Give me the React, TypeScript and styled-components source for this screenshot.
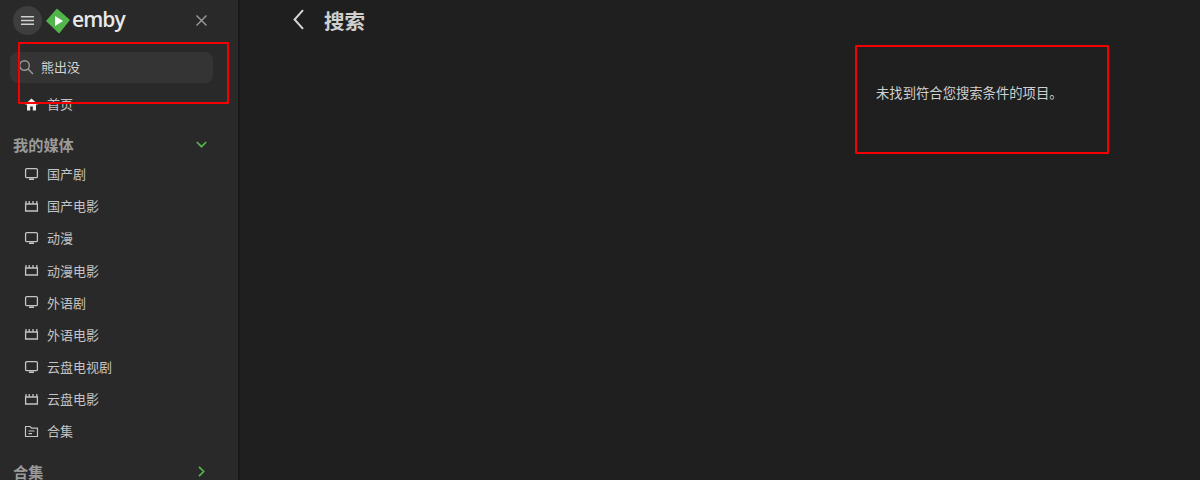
import React from "react";
import styled, { createGlobalStyle } from "styled-components";

const GlobalStyle = createGlobalStyle`
  html, body {
    margin: 0;
    height: 100%;
    background: #1f1f1f;
    overflow: hidden;
  }
  * {
    box-sizing: border-box;
  }
`;

const Page = styled.div`
  display: flex;
  width: 1200px;
  height: 480px;
  overflow: hidden;
  position: relative;
  color: #d8d8d8;
  font-family: "Noto Sans CJK SC", "Noto Sans", sans-serif;
`;

const Sidebar = styled.aside`
  flex: 0 0 240px;
  height: 480px;
  overflow: hidden;
  background: #292929;
  border-right: 2px solid #181818;
`;

const Brand = styled.div`
  display: flex;
  align-items: center;
  height: 41px;
  padding: 0 31px 0 13px;
`;

const MenuButton = styled.div`
  display: flex;
  align-items: center;
  justify-content: center;
  width: 29px;
  height: 29px;
  border-radius: 50%;
  background: #3e3e3e;
  color: #d0d0d0;
`;

const Logo = styled.div`
  display: flex;
  align-items: center;
  margin-left: 4px;
  flex: 1;
`;

const LogoText = styled.span`
  font-family: "Open Sans", sans-serif;
  font-size: 21px;
  font-weight: 600;
  letter-spacing: -0.9px;
  line-height: 24px;
  margin: -3px 0 0 2px;
  color: #e8e8e8;
`;

const CloseButton = styled.div`
  display: flex;
  color: #9c9c9c;
`;

const SearchBox = styled.div`
  display: flex;
  align-items: center;
  gap: 7px;
  width: 203px;
  height: 31px;
  margin: 11px 0 0 10px;
  padding: 0 0 2px 8px;
  border-radius: 8px;
  background: #343434;
  color: #9a9a9a;
`;

const SearchText = styled.span`
  font-size: 13px;
  line-height: 18px;
  color: #d4d4d4;
`;

const Nav = styled.nav`
  display: flex;
  flex-direction: column;
  margin-top: 5px;
`;

const NavRow = styled.div`
  display: flex;
  align-items: center;
  gap: 8px;
  height: 32.15px;
  padding-left: 24px;
  font-size: 13px;
  line-height: 18px;
  color: #c4c4c4;
`;

const SectionRow = styled.div`
  display: flex;
  align-items: center;
  justify-content: space-between;
  height: 18px;
  margin: 15px 0 5px;
  padding: 0 31px 0 13px;
  font-size: 15.2px;
  font-weight: 700;
  line-height: 18px;
  color: #9a9a9a;
`;

const SectionIcon = styled.span`
  display: flex;
  color: #52b54b;
`;

const Main = styled.main`
  flex: 1;
  display: flex;
  flex-direction: column;
`;

const Header = styled.header`
  display: flex;
  align-items: center;
  gap: 20px;
  height: 39px;
  padding-left: 53px;
  color: #d6d6d6;
`;

const Title = styled.h1`
  margin: 0;
  font-size: 20.5px;
  font-weight: 700;
  line-height: 28px;
  color: #cfcfcf;
`;

const EmptyMessage = styled.p`
  margin: 44px 0 0 636px;
  font-size: 13.33px;
  line-height: 20px;
  color: #d0d0d0;
`;

const Annotation = styled.div<{ $x: number; $y: number; $w: number; $h: number }>`
  position: absolute;
  left: ${({ $x }) => $x}px;
  top: ${({ $y }) => $y}px;
  width: ${({ $w }) => $w}px;
  height: ${({ $h }) => $h}px;
  border: 2px solid #f40000;
  border-radius: 1px;
  pointer-events: none;
`;

const TvIcon = () => (
  <svg width="15" height="15" viewBox="0 0 15 15" fill="none" stroke="currentColor">
    <rect x="1.6" y="1.6" width="11.8" height="9" rx="1.2" strokeWidth="1.3" />
    <path d="M5 12.2h5" strokeWidth="1.6" />
  </svg>
);

const MovieIcon = () => (
  <svg width="15" height="15" viewBox="0 0 15 15" fill="none" stroke="currentColor">
    <path d="M1.6 5h11.8v7H1.6z" strokeWidth="1.3" />
    <path d="M2 2v3M5.2 2v3M9 2v3M12.8 2v3" strokeWidth="1.3" />
  </svg>
);

const FolderIcon = () => (
  <svg width="15" height="15" viewBox="0 0 15 15" fill="none" stroke="currentColor" strokeWidth="1.2">
    <path d="M1.5 2.5h4.5l1.5 1.6h6v8.4h-12z" strokeLinejoin="round" />
    <path d="M4.5 7h6M4.5 9.6h3.5" />
  </svg>
);

const HomeIcon = () => (
  <svg width="15" height="15" viewBox="0 0 15 15" fill="#eeeeee">
    <path d="M7.5 1.5L1 7.5h2v6h3.2V9.5h2.6v4H12v-6h2z" />
  </svg>
);

const items: { label: string; icon: React.ReactNode }[] = [
  { label: "国产剧", icon: <TvIcon /> },
  { label: "国产电影", icon: <MovieIcon /> },
  { label: "动漫", icon: <TvIcon /> },
  { label: "动漫电影", icon: <MovieIcon /> },
  { label: "外语剧", icon: <TvIcon /> },
  { label: "外语电影", icon: <MovieIcon /> },
  { label: "云盘电视剧", icon: <TvIcon /> },
  { label: "云盘电影", icon: <MovieIcon /> },
  { label: "合集", icon: <FolderIcon /> },
];

export default function App() {
  return (
    <Page>
      <GlobalStyle />
      <Sidebar>
        <Brand>
          <MenuButton>
            <svg width="13" height="13" viewBox="0 0 13 13" stroke="currentColor" strokeWidth="1.5">
              <path d="M0 2.8h13M0 6.5h13M0 10.2h13" />
            </svg>
          </MenuButton>
          <Logo>
            <svg width="24" height="26" viewBox="0 0 24 26">
              <path
                d="M11 1.5L23 12 13 24.5 1 13z"
                fill="#52b54b"
                stroke="#52b54b"
                strokeWidth="1.5"
                strokeLinejoin="round"
              />
              <path d="M9 8l8 5-8 5z" fill="#ffffff" />
            </svg>
            <LogoText>emby</LogoText>
          </Logo>
          <CloseButton>
            <svg width="11" height="11" viewBox="0 0 11 11" stroke="currentColor" strokeWidth="1.4">
              <path d="M0.5 0.5l10 10M10.5 0.5l-10 10" />
            </svg>
          </CloseButton>
        </Brand>
        <SearchBox>
          <svg width="16" height="16" viewBox="0 0 16 16" fill="none" stroke="currentColor" strokeWidth="1.4">
            <circle cx="6.5" cy="6.5" r="4.8" />
            <path d="M10 10l5 5" />
          </svg>
          <SearchText>熊出没</SearchText>
        </SearchBox>
        <Nav>
          <NavRow>
            <HomeIcon />
            首页
          </NavRow>
          <SectionRow>
            我的媒体
            <SectionIcon>
              <svg width="11" height="11" viewBox="0 0 11 11" fill="none" stroke="currentColor" strokeWidth="1.7">
                <path d="M0.8 3l4.7 4.7L10.2 3" />
              </svg>
            </SectionIcon>
          </SectionRow>
          {items.map((item) => (
            <NavRow key={item.label}>
              {item.icon}
              {item.label}
            </NavRow>
          ))}
          <SectionRow>
            合集
            <SectionIcon>
              <svg width="11" height="11" viewBox="0 0 11 11" fill="none" stroke="currentColor" strokeWidth="1.7">
                <path d="M3 0.8l4.7 4.7L3 10.2" />
              </svg>
            </SectionIcon>
          </SectionRow>
        </Nav>
      </Sidebar>
      <Main>
        <Header>
          <svg width="11" height="21" viewBox="0 0 11 21" fill="none" stroke="currentColor" strokeWidth="2">
            <path d="M10 1.2L1.6 10.5 10 19.8" />
          </svg>
          <Title>搜索</Title>
        </Header>
        <EmptyMessage>未找到符合您搜索条件的项目。</EmptyMessage>
      </Main>
      <Annotation $x={18} $y={42} $w={211} $h={62} />
      <Annotation $x={855} $y={45} $w={254} $h={109} />
    </Page>
  );
}
